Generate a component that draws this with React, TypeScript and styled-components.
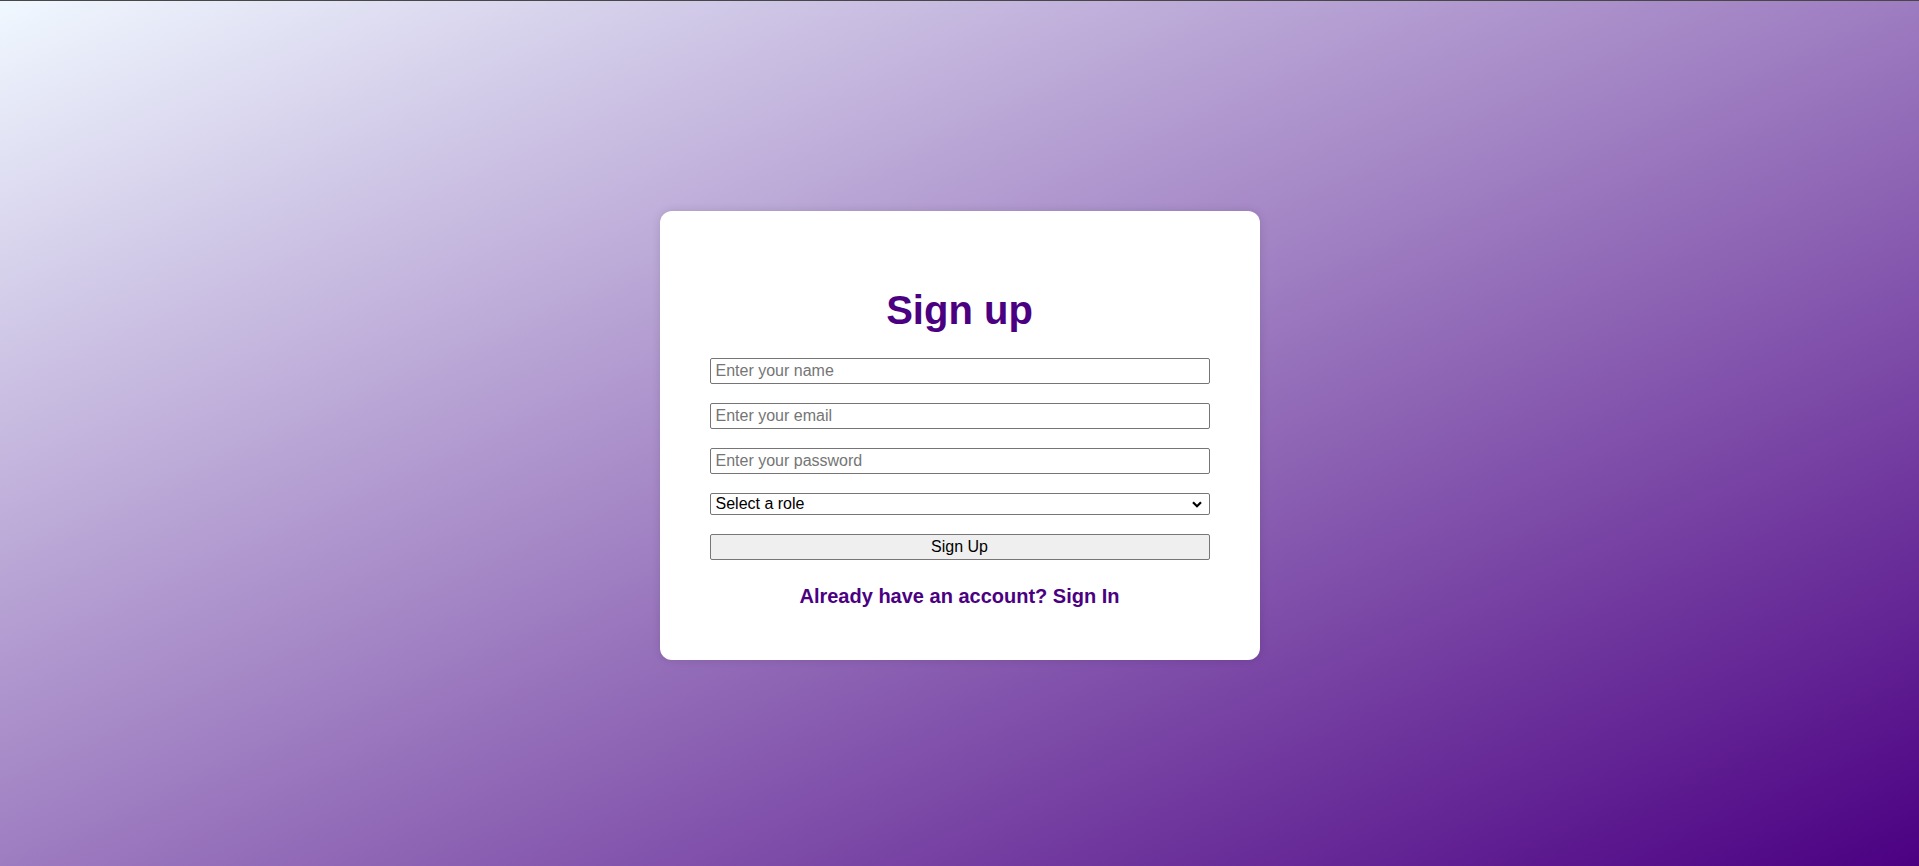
import styled, { createGlobalStyle } from 'styled-components';

const Indigo = '#4b0082';

const GlobalStyle = createGlobalStyle`
  html, body {
    margin: 0;
    padding: 0;
  }
  body {
    font-family: "Liberation Sans", Arial, sans-serif;
  }
  * {
    box-sizing: border-box;
  }
`;

const Chevron = () => (
  <ChevronIcon width="10" height="7" viewBox="0 0 10 7">
    <path d="M1 1.2 L5 5.2 L9 1.2" fill="none" stroke="#000" strokeWidth="2.2" />
  </ChevronIcon>
);

export default function App() {
  return (
    <>
      <GlobalStyle />
      <Page>
        <Card>
          <Title>Sign up</Title>
          <Form onSubmit={e => e.preventDefault()}>
            <Field type="text" placeholder="Enter your name" />
            <Field type="email" placeholder="Enter your email" />
            <Field type="password" placeholder="Enter your password" />
            <SelectWrap>
              <RoleSelect defaultValue="">
                <option value="">Select a role</option>
                <option value="student">Student</option>
                <option value="teacher">Teacher</option>
              </RoleSelect>
              <Chevron />
            </SelectWrap>
            <SubmitButton type="submit">Sign Up</SubmitButton>
          </Form>
          <SwitchLink>Already have an account? Sign In</SwitchLink>
        </Card>
      </Page>
    </>
  );
}

const Page = styled.div`
  min-height: 100vh;
  border-top: 1px solid #474747;
  background: linear-gradient(to bottom right, #f0f8ff, ${Indigo});
  display: flex;
  align-items: center;
  justify-content: center;
  padding-top: 3px;
`;

const Card = styled.div`
  width: 600px;
  padding: 50px 50px 52px;
  background: #ffffff;
  border-radius: 12px;
  box-shadow: 0 0 10px rgba(0, 0, 0, 0.12);
  display: flex;
  flex-direction: column;
  align-items: center;
`;

const Title = styled.h1`
  margin: 26px 0 25px;
  font-size: 40px;
  line-height: 46px;
  font-weight: 700;
  color: ${Indigo};
`;

const Form = styled.form`
  width: 100%;
  display: flex;
  flex-direction: column;
  gap: 19px;
`;

const Field = styled.input`
  width: 100%;
  height: 26px;
  padding: 0 5px;
  border: 1px solid #767676;
  border-radius: 2px;
  font-family: "Liberation Sans", Arial, sans-serif;
  font-size: 16px;
  color: #000;
  background: #fff;

  &::placeholder {
    color: #757575;
  }
`;

const SelectWrap = styled.div`
  position: relative;
  width: 100%;
`;

const RoleSelect = styled.select`
  display: block;
  width: 100%;
  height: 22px;
  padding: 0 24px 0 5px;
  border: 1px solid #767676;
  border-radius: 2px;
  appearance: none;
  font-family: "Liberation Sans", Arial, sans-serif;
  font-size: 16px;
  color: #000;
  background: #fff;
`;

const ChevronIcon = styled.svg`
  position: absolute;
  right: 8px;
  top: 8px;
  pointer-events: none;
`;

const SubmitButton = styled.button`
  width: 100%;
  height: 26px;
  border: 1px solid #767676;
  border-radius: 2px;
  background: #efefef;
  font-family: "Liberation Sans", Arial, sans-serif;
  font-size: 16px;
  color: #000;
  cursor: pointer;
`;

const SwitchLink = styled.p`
  margin: 25px 0 0;
  font-size: 20px;
  line-height: 23px;
  font-weight: 700;
  color: ${Indigo};
  cursor: pointer;
`;
